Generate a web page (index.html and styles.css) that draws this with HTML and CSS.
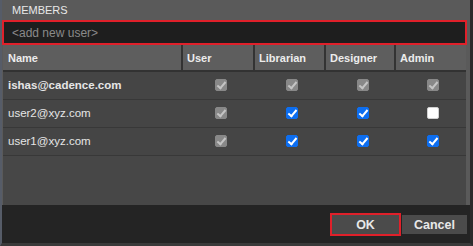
FILE: index.html
```html
<!DOCTYPE html>
<html lang="en">
<head>
  <meta charset="UTF-8" />
  <title>Members</title>
  <link rel="stylesheet" href="styles.css">
</head>
<body>

  <div class="dialog">
    <div class="title">MEMBERS</div>

    <div class="add-user">
      <input type="text" placeholder="&lt;add new user&gt;" autocomplete="off"/>
    </div>

    <div class="members">
      <div class="row head">
        <div class="cell name">Name</div>
        <div class="cell">User</div>
        <div class="cell">Librarian</div>
        <div class="cell">Designer</div>
        <div class="cell">Admin</div>
      </div>

      <div class="row owner">
        <div class="cell name">ishas@cadence.com</div>
        <div class="cell check"><input type="checkbox" checked disabled></div>
        <div class="cell check"><input type="checkbox" checked disabled></div>
        <div class="cell check"><input type="checkbox" checked disabled></div>
        <div class="cell check"><input type="checkbox" checked disabled></div>
      </div>

      <div class="row">
        <div class="cell name">user2@xyz.com</div>
        <div class="cell check"><input type="checkbox" checked disabled></div>
        <div class="cell check"><input type="checkbox" checked></div>
        <div class="cell check"><input type="checkbox" checked></div>
        <div class="cell check"><input type="checkbox"></div>
      </div>

      <div class="row">
        <div class="cell name">user1@xyz.com</div>
        <div class="cell check"><input type="checkbox" checked disabled></div>
        <div class="cell check"><input type="checkbox" checked></div>
        <div class="cell check"><input type="checkbox" checked></div>
        <div class="cell check"><input type="checkbox" checked></div>
      </div>
    </div>

    <div class="actions">
      <button class="ok">OK</button>
      <button>Cancel</button>
    </div>
  </div>

</body>
</html>
```

FILE: styles.css
```css
* {
  box-sizing: border-box;
}

body {
  font-family: 'Liberation Sans', Arial, sans-serif;
  background-color: #2a2a2a;
  margin: 0;
  padding: 0;
}

.dialog {
  width: 473px;
  height: 246px;
  display: flex;
  flex-direction: column;
  background-color: #5a5a5a;
  border-left: 2px solid #565c68;
  border-right: 3px solid #2b2b2b;
  border-bottom: 3px solid #3a3a3a;
}

.title {
  height: 20px;
  padding: 4px 0 0 10px;
  font-size: 11px;
  color: #e8e8e8;
}

.add-user {
  margin-right: 3px;
}

.add-user input {
  display: block;
  width: 100%;
  height: 25px;
  margin: 0;
  padding: 0 0 0 8px;
  border: 2px solid #e0202a;
  background-color: #1e1e1e;
  color: #dcdcdc;
  font-family: inherit;
  font-size: 12px;
  outline: none;
}

.add-user input::placeholder {
  color: #8a8a8a;
}

.members {
  flex: 1;
  margin: 0 4px 0 1px;
  background-color: #474747;
}

.row {
  display: grid;
  grid-template-columns: 180px 72px 71px 70px 70px;
  height: 28px;
  border-bottom: 1px solid #383838;
  background-color: #454545;
}

.cell {
  display: flex;
  align-items: center;
  padding-left: 4px;
  padding-bottom: 2px;
  font-size: 11.5px;
  color: #e6e6e6;
}

.row .name {
  padding-left: 5px;
}

.head {
  height: 27px;
  background-color: #5e5e5e;
  border-bottom: 2px solid #323232;
}

.head .cell {
  padding-bottom: 0;
  font-size: 11px;
  font-weight: bold;
  color: #ececec;
  border-right: 2px solid #333;
}

.head .cell:last-child {
  border-right: none;
}

.owner .name {
  font-weight: bold;
}

.check {
  justify-content: center;
  padding-left: 3px;
}

.check input {
  appearance: none;
  -webkit-appearance: none;
  position: relative;
  width: 12px;
  height: 12px;
  margin: 0;
  border-radius: 2px;
  background-color: #ffffff;
  border: 1px solid #d0d0d0;
}

.check input:checked {
  background-color: #0d6ef0;
  border-color: #0d6ef0;
}

.check input:checked::after {
  content: "";
  position: absolute;
  left: 3px;
  top: 0px;
  width: 3px;
  height: 7px;
  border: solid #ffffff;
  border-width: 0 2px 2px 0;
  transform: rotate(40deg);
}

.check input:disabled {
  background-color: #888;
  border-color: #888;
}

.check input:disabled::after {
  border-color: #c4c4c4;
}

.actions {
  height: 38px;
  display: flex;
  justify-content: flex-end;
  align-items: flex-start;
  gap: 3px;
  padding: 10px 3px 0 0;
  background-color: #242424;
}

button {
  height: 19px;
  width: 65px;
  padding: 0;
  background-color: #4b4b4b;
  color: #e8e8e8;
  font-family: inherit;
  font-size: 12.5px;
  font-weight: bold;
  border: none;
  border-radius: 0;
  cursor: pointer;
}

button.ok {
  width: 67px;
  outline: 2px solid #e0202a;
  outline-offset: 0;
}

button:hover {
  background-color: #555;
}
```
